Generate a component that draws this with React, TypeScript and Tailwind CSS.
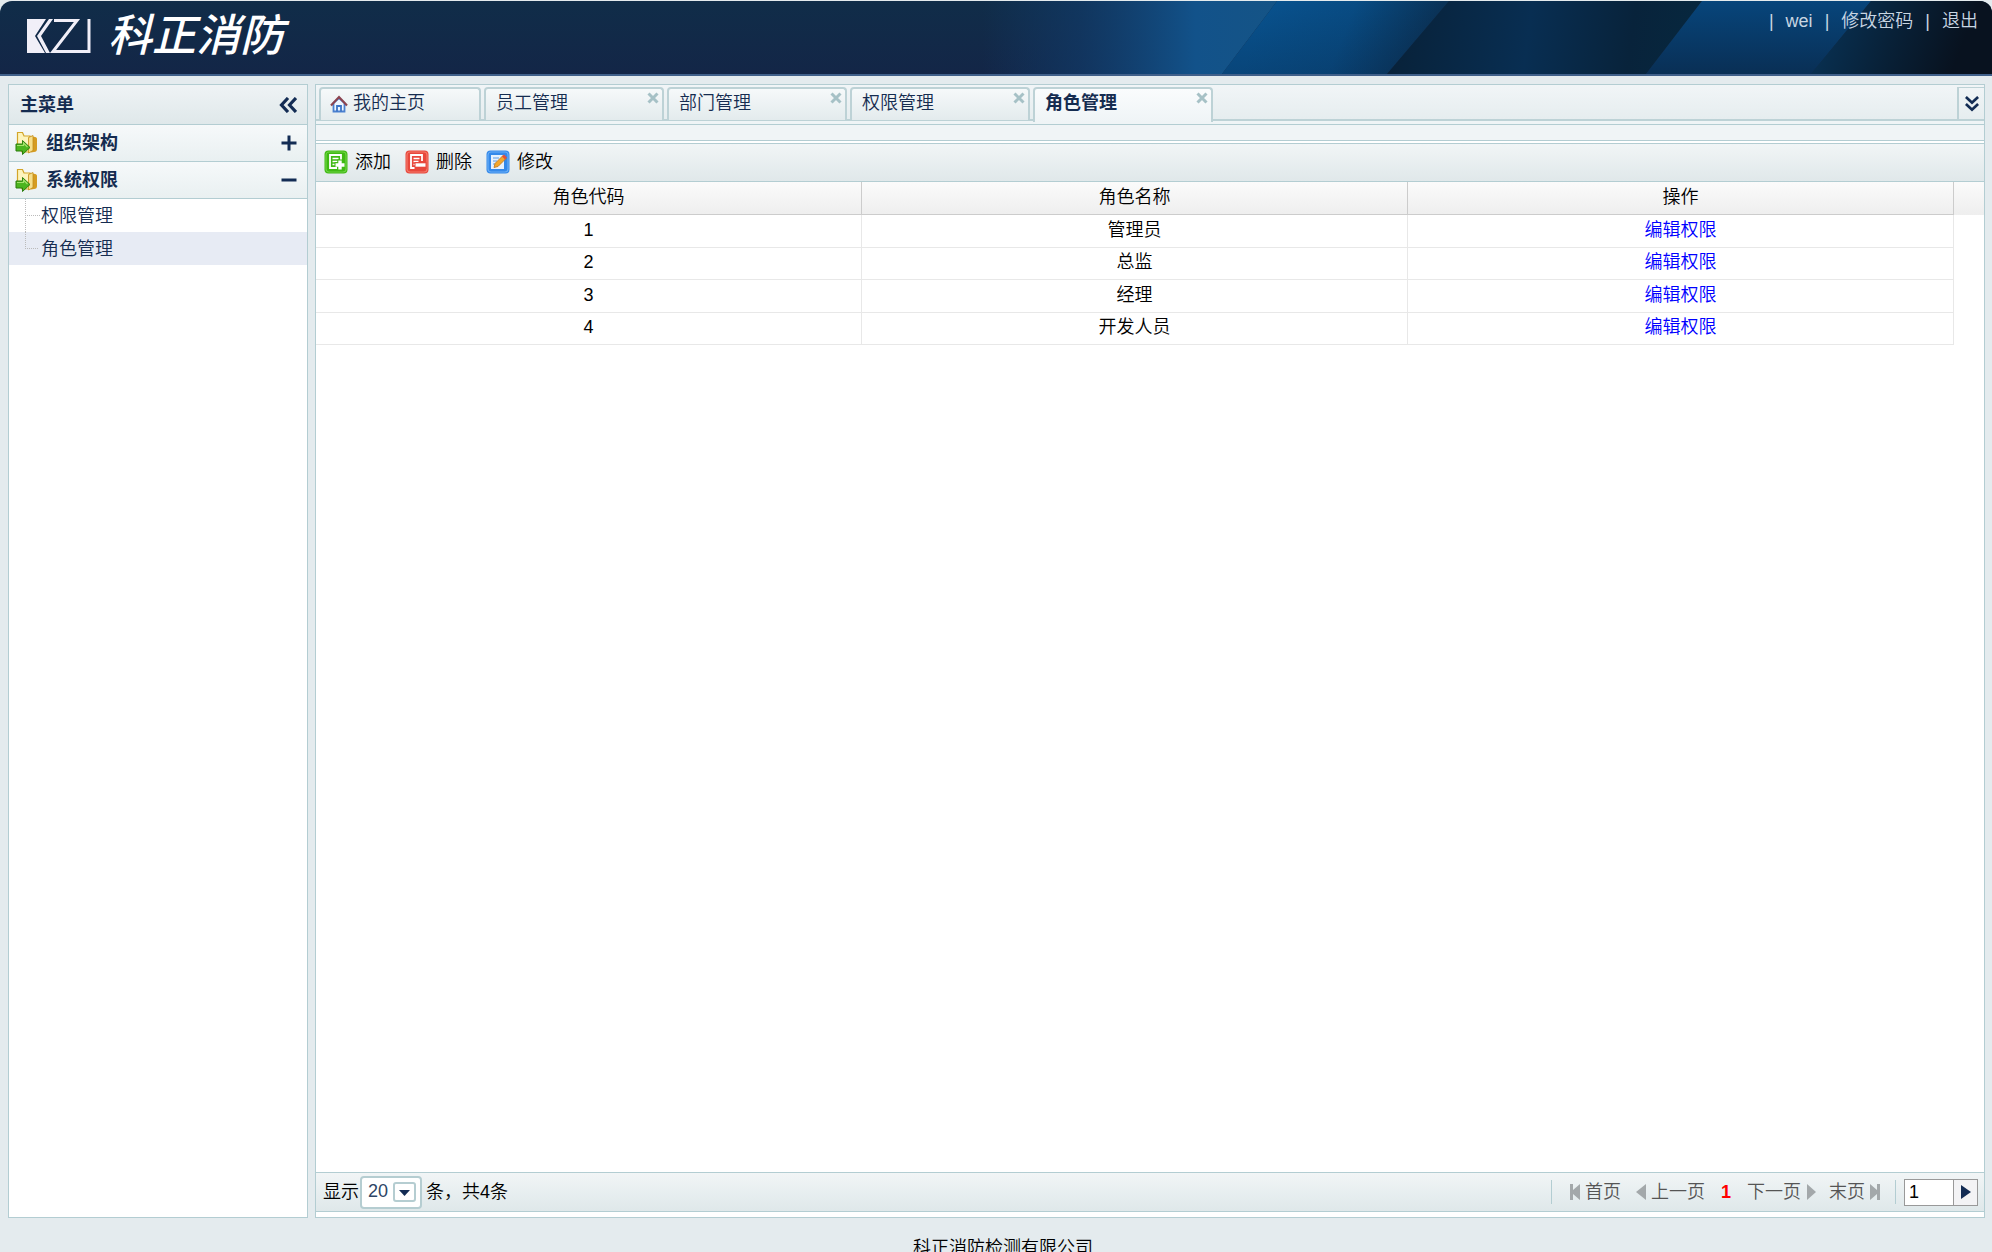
import { useState } from 'react'
import type { ReactNode } from 'react'

const roles = [
  { code: 1, name: '管理员' },
  { code: 2, name: '总监' },
  { code: 3, name: '经理' },
  { code: 4, name: '开发人员' },
]

const tabs = ['员工管理', '部门管理', '权限管理', '角色管理']

function HeaderArt() {
  return (
    <svg className="absolute inset-y-0 right-0 h-full w-[1042px]" viewBox="0 0 1042 73" preserveAspectRatio="none" aria-hidden="true">
      <defs>
        <linearGradient id="glow" x1="0" x2="1" y1="0" y2="0">
          <stop offset="0.1" stopColor="#113a68" stopOpacity="0" />
          <stop offset="0.4" stopColor="#113a68" stopOpacity="0.7" />
          <stop offset="0.75" stopColor="#12528a" />
          <stop offset="1" stopColor="#155486" />
        </linearGradient>
        <linearGradient id="blue" gradientUnits="userSpaceOnUse" x1="320" x2="470" y1="0" y2="60">
          <stop offset="0" stopColor="#08528e" />
          <stop offset="0.5" stopColor="#084c84" />
          <stop offset="1" stopColor="#0a3358" />
        </linearGradient>
        <linearGradient id="deep" gradientUnits="userSpaceOnUse" x1="450" x2="740" y1="0" y2="40">
          <stop offset="0" stopColor="#08223a" />
          <stop offset="0.45" stopColor="#082e52" />
          <stop offset="0.8" stopColor="#08233b" />
          <stop offset="1" stopColor="#07273e" />
        </linearGradient>
        <linearGradient id="band" x1="0" x2="0" y1="0" y2="1">
          <stop offset="0" stopColor="#07457b" />
          <stop offset="1" stopColor="#092f55" />
        </linearGradient>
        <linearGradient id="night" gradientUnits="userSpaceOnUse" x1="880" x2="1010" y1="0" y2="50">
          <stop offset="0" stopColor="#083153" />
          <stop offset="0.5" stopColor="#082138" />
          <stop offset="1" stopColor="#08121f" />
        </linearGradient>
        <linearGradient id="shade" x1="0" x2="0" y1="0" y2="1">
          <stop offset="0" stopColor="#0a1f3d" stopOpacity="0" />
          <stop offset="1" stopColor="#0a1f3d" stopOpacity="0.25" />
        </linearGradient>
      </defs>
      <path d="M0 0H327L272 73H0z" fill="url(#glow)" />
      <path d="M327 0H499L437 73H272z" fill="url(#blue)" />
      <path d="M327 0H499L437 73H272z" fill="url(#shade)" />
      <path d="M499 0H752L696 73H437z" fill="url(#deep)" />
      <path d="M752 0H921L861 73H696z" fill="url(#band)" />
      <path d="M921 0H1042V73H861z" fill="url(#night)" />
    </svg>
  )
}

function FolderIcon() {
  return (
    <svg className="size-6 shrink-0" viewBox="0 0 24 24" aria-hidden="true">
      <path d="M2.500 1.500h5l1.500 3.500h6v16H7L2.500 15z" fill="#fdf4bd" stroke="#d3a52a" strokeWidth="1.200" />
      <path d="M16 5l4 1c1.500 0 2 1 2 2v10c0 2-1 3-3 3l-3 .5z" fill="#d59c22" />
      <path d="M13.500 6.500l4.500-2v15l-4.500 2.500z" fill="#f6df8c" stroke="#c48d18" strokeWidth="0.800" />
      <path d="M1 13h6.500V9.500l7.500 7-7.500 7V20H1z" fill="#4cb51f" stroke="#2a7d0c" />
      <path d="M2 14.500h6.500v-2.500l4 4" fill="none" stroke="#a5e26c" strokeWidth="1.200" />
    </svg>
  )
}

function DoubleChevron({ className }: { className: string }) {
  return (
    <svg className={className} viewBox="0 0 18 16" fill="none" stroke="#132c54" strokeWidth="3.200" aria-hidden="true">
      <path d="M9 1L2.500 8L9 15M17 1l-6.500 7L17 15" />
    </svg>
  )
}

function HomeIcon() {
  return (
    <svg className="h-[18px] w-[18px]" viewBox="0 0 18 18" fill="none" aria-hidden="true">
      <path d="M3.500 8v8.500h11V8L9 3z" fill="#eef6ff" stroke="#4a80cf" strokeWidth="1.800" />
      <path d="M7 16.500V11h4v5.500" stroke="#3c74c6" strokeWidth="1.800" />
      <path d="M1 10.500L9 2l8 8.500" stroke="#8c4450" strokeWidth="2.200" />
    </svg>
  )
}

function ToolIcon({ kind }: { kind: 'add' | 'remove' | 'edit' }) {
  const fill = { add: '#3fb913', remove: '#e8473c', edit: '#3489ea' }[kind]
  const light = { add: '#6fd445', remove: '#f37a6a', edit: '#6aaef5' }[kind]
  return (
    <svg className="size-6" viewBox="0 0 24 24" fill="none" aria-hidden="true">
      <rect x="0.500" y="0.500" width="23" height="23" rx="4" fill={fill} />
      <rect x="2" y="2" width="20" height="20" rx="3" stroke={light} strokeWidth="1.200" />
      {kind === 'edit' ? (
        <>
          <path d="M5 5h13v14H5z" fill="#e6f1fd" />
          <path d="M7 8h6M7 11h4M7 14h3" stroke="#5a9be6" />
          <path d="M8 17.500l1-4 8-8 3 3-8 8z" fill="#f4a62a" stroke="#b8741c" strokeWidth="0.800" />
          <path d="M16 6.500l2-2 3 3-2 2z" fill="#e2513b" />
        </>
      ) : (
        <>
          <path d="M17 11V5H6v13h7" stroke="#fff" strokeWidth="1.800" />
          <path d="M8.500 8.500h6M8.500 11.500h5M8.500 14.500h3" stroke="#fff" strokeWidth="1.300" />
          {kind === 'add' ? (
            <>
              <path d="M16 9.500v10M10.500 14.500h10" stroke={fill} strokeWidth="5" />
              <path d="M16 10.500v9M11.500 15h9" stroke="#fff" strokeWidth="3.400" />
            </>
          ) : (
            <>
              <path d="M9.500 12h12v7h-12z" fill={fill} />
              <path d="M10.500 15h10" stroke="#fff" strokeWidth="3.400" />
            </>
          )}
        </>
      )}
    </svg>
  )
}

function Sidebar() {
  return (
    <aside className="flex w-[300px] shrink-0 flex-col border border-[#b3cdd2] bg-white text-[#152c50]">
      <div className="flex h-10 items-center justify-between border-b border-[#b3cdd2] bg-gradient-to-b from-[#eff3f5] to-[#dfe8ea] pr-2.5 pl-[11px] font-bold">
        主菜单
        <button type="button" aria-label="收起">
          <DoubleChevron className="h-4 w-[18px]" />
        </button>
      </div>
      <SidebarGroup title="组织架构" />
      <SidebarGroup title="系统权限" open />
      <ul>
        <li>
          <TreeLink>权限管理</TreeLink>
        </li>
        <li className="bg-[#e7ebf4]">
          <TreeLink last>角色管理</TreeLink>
        </li>
      </ul>
    </aside>
  )
}

function SidebarGroup({ title, open = false }: { title: string; open?: boolean }) {
  return (
    <button
      type="button"
      aria-expanded={open}
      className="flex h-[37px] w-full items-center border-b border-[#b3cdd2] bg-gradient-to-b from-[#f6f9fa] to-[#e9f0f1] pr-2.5 pl-1.5 font-bold"
    >
      <FolderIcon />
      <span className="ml-[7px] flex-1 text-left">{title}</span>
      <svg className="size-4" viewBox="0 0 16 16" stroke="#132c54" strokeWidth="3" aria-hidden="true">
        <path d={open ? 'M0.500 8h15' : 'M0.500 8h15M8 0.500v15'} />
      </svg>
    </button>
  )
}

function TreeLink({ children, last = false }: { children: ReactNode; last?: boolean }) {
  return (
    <a href="#" className="flex h-[33px] items-center pl-4">
      <svg className="h-full w-4" viewBox="0 0 16 33" stroke="#bbb" strokeDasharray="1 1" aria-hidden="true">
        <path d={last ? 'M0.500 0v16M0 16.500h14' : 'M0.500 0v33M0 16.500h16'} />
      </svg>
      {children}
    </a>
  )
}

function Tab({ title, active }: { title: string; active: boolean }) {
  return (
    <div
      className={
        active
          ? 'flex h-[35px] w-[180px] justify-between rounded-t-sm border-x-2 border-t-2 border-[#bdd2d6] bg-gradient-to-b from-[#fafcfd] to-[#eff4f6] font-bold'
          : 'flex h-[33px] w-[180px] justify-between rounded-t-sm border-x-2 border-t-2 border-[#bdd2d6] bg-gradient-to-b from-[#f6f9fa] to-[#e3ebed]'
      }
    >
      <button type="button" className="h-7 pl-2.5">
        {title}
      </button>
      <button type="button" aria-label={'关闭' + title} className="h-[18px] pr-[3px]">
        <svg className="size-3" viewBox="0 0 12 12" stroke="#a6c1c6" strokeWidth="3" aria-hidden="true">
          <path d="M1.500 1.500l9 9M10.500 1.500l-9 9" />
        </svg>
      </button>
    </div>
  )
}

function Pager() {
  const [page, setPage] = useState('1')
  return (
    <div className="flex h-10 shrink-0 items-center border-y border-[#b3cdd2] bg-gradient-to-b from-[#f1f5f6] to-[#dfe8ea] pr-1.5 pl-[7px]">
      <label htmlFor="size" className="mr-px">
        显示
      </label>
      <div className="relative mr-1">
        <select
          id="size"
          defaultValue="20"
          className="h-[33px] w-[62px] appearance-none rounded-sm border-2 border-[#b5cdd1] bg-white pb-0.5 pl-1.5 text-[#2d4566]"
        >
          <option>20</option>
          <option>50</option>
        </select>
        <svg className="pointer-events-none absolute top-1.5 right-1.5 h-5 w-[23px]" viewBox="0 0 23 20" aria-hidden="true">
          <rect x="1" y="1" width="21" height="18" rx="2" fill="#fff" stroke="#b5cdd1" strokeWidth="2" />
          <path d="M6 8h11l-5.500 6z" fill="#132c54" />
        </svg>
      </div>
      <span>条，共4条</span>

      <nav className="ml-auto flex items-center text-[#555]">
        <span className="mr-[17px] h-6 w-px bg-[#b3cdd2]" />
        <button type="button" className="mr-3.5 flex items-center gap-1">
          <svg className="h-4 w-3" viewBox="0 0 12 16" fill="#a3a8aa" aria-hidden="true">
            <path d="M1 0h3v6l7-6v16l-7-6v6H1z" />
          </svg>
          首页
        </button>
        <button type="button" className="mr-4 flex items-center gap-1">
          <svg className="h-4 w-3" viewBox="0 0 12 16" fill="#a3a8aa" aria-hidden="true">
            <path d="M11 0v16L1 8z" />
          </svg>
          上一页
        </button>
        <span className="mr-4 font-bold text-[#f00]">1</span>
        <button type="button" className="mr-3 flex items-center gap-1">
          下一页
          <svg className="h-4 w-3" viewBox="0 0 12 16" fill="#a3a8aa" aria-hidden="true">
            <path d="M2 0v16l9-8z" />
          </svg>
        </button>
        <button type="button" className="mr-3.5 flex items-center gap-1">
          末页
          <svg className="h-4 w-3" viewBox="0 0 12 16" fill="#a3a8aa" aria-hidden="true">
            <path d="M11 0H8v6L1 0v16l7-6v6h3z" />
          </svg>
        </button>
        <span className="mr-2 h-6 w-px bg-[#b3cdd2]" />
        <input
          aria-label="页码"
          value={page}
          onChange={(e) => setPage(e.target.value)}
          className="h-[27px] w-[50px] border border-[#999] bg-white px-1 text-black"
        />
        <button type="button" aria-label="跳转" className="flex h-[27px] w-6 items-center justify-center border border-l-0 border-[#999] bg-[#f3f3f5]">
          <svg className="h-4 w-2.5" viewBox="0 0 10 16" fill="#132c54" aria-hidden="true">
            <path d="M0 1v14l10-7z" />
          </svg>
        </button>
      </nav>
    </div>
  )
}

export default function App() {
  return (
    <div className="flex h-screen flex-col overflow-hidden bg-[#e4ebee] pt-px font-['Liberation_Sans','Noto_Sans_CJK_SC',sans-serif] text-[18px] leading-6 font-[350]">
      <header className="relative flex h-[75px] shrink-0 justify-between overflow-hidden rounded-t-xl border-b-2 border-[#40608a] bg-gradient-to-b from-[#102d49] to-[#132647]">
        <HeaderArt />
        <div className="relative flex items-center pb-1 pl-[26px] text-white">
          <svg className="h-9 w-[66px]" viewBox="0 0 66 36" fill="none" aria-hidden="true">
            <path d="M1 1h19L9 18l10 17H1z" fill="#f1eff8" />
            <path d="M23 1h4L15 18l9 17h-4L11 18z" fill="#f1eff8" />
            <path d="M28 2.500h23L27 33.500h36V1" stroke="#f1eff8" strokeWidth="3" />
          </svg>
          <span className="ml-4 text-[44px] font-medium italic">科正消防</span>
        </div>
        <nav className="relative flex h-10 items-center gap-3 pr-3.5 text-[#c8d6e2]">
          <span>|</span>
          <a href="#">wei</a>
          <span>|</span>
          <a href="#">修改密码</a>
          <span>|</span>
          <a href="#">退出</a>
        </nav>
      </header>

      <div className="flex min-h-0 flex-1 gap-[7px] pt-2 pr-[7px] pl-2">
        <Sidebar />
        <main className="flex min-w-0 flex-1 flex-col border border-[#b3cdd2] bg-white">
          <div className="flex h-10 shrink-0 border-b border-[#b3cdd2] bg-[#eff4f6]">
            <div className="flex h-9 flex-1 gap-[3px] border-b-2 border-[#bdd2d6] bg-gradient-to-b from-[#f1f5f7] to-[#e6edef] pt-0.5 pl-[3px] text-[#152c50]">
              <button
                type="button"
                className="flex h-[33px] w-[162px] items-start gap-[5px] rounded-t-sm border-x-2 border-t-2 border-[#bdd2d6] bg-gradient-to-b from-[#f6f9fa] to-[#e3ebed] pt-0.5 pl-[9px]"
              >
                <span className="pt-1">
                  <HomeIcon />
                </span>
                我的主页
              </button>
              {tabs.map((title) => (
                <Tab key={title} title={title} active={title === '角色管理'} />
              ))}
              <button type="button" aria-label="更多" className="ml-auto flex w-[27px] items-center justify-center border-t border-l-2 border-[#bdd2d6]">
                <DoubleChevron className="h-[14px] w-4 -rotate-90" />
              </button>
            </div>
          </div>
          <div className="h-4 shrink-0 border-b border-[#b3cdd2] bg-[#f0f4f6]" />
          <div className="mt-0.5 flex h-[39px] shrink-0 items-center gap-3.5 border-y border-[#b3cdd2] bg-gradient-to-b from-[#f1f5f6] to-[#e0e8ea] pb-px pl-2">
            <button type="button" className="flex items-center gap-[7px]">
              <ToolIcon kind="add" />
              添加
            </button>
            <button type="button" className="flex items-center gap-[7px]">
              <ToolIcon kind="remove" />
              删除
            </button>
            <button type="button" className="flex items-center gap-[7px]">
              <ToolIcon kind="edit" />
              修改
            </button>
          </div>
          <div className="flex min-h-0 flex-1 items-start">
            <table className="h-[163px] flex-1 table-fixed border-separate border-spacing-0 text-center">
              <thead>
                <tr className="h-[33px] bg-gradient-to-b from-[#fbfbfb] to-[#eeeeee]">
                  <th className="border-r border-b border-[#ccc] p-0 pb-0.5 font-[350]">角色代码</th>
                  <th className="border-r border-b border-[#ccc] p-0 pb-0.5 font-[350]">角色名称</th>
                  <th className="border-r border-b border-[#ccc] p-0 pb-0.5 font-[350]">操作</th>
                </tr>
              </thead>
              <tbody>
                {roles.map((role) => (
                  <tr key={role.code}>
                    <td className="border-r border-b border-[#e8e8e8] p-0 pb-0.5">{role.code}</td>
                    <td className="border-r border-b border-[#e8e8e8] p-0 pb-0.5">{role.name}</td>
                    <td className="border-r border-b border-[#e8e8e8] p-0 pb-0.5">
                      <a href="#" className="text-[#00f]">
                        编辑权限
                      </a>
                    </td>
                  </tr>
                ))}
              </tbody>
            </table>
            <div className="h-[33px] w-[30px] bg-gradient-to-b from-[#fbfbfb] to-[#eeeeee]" />
          </div>
          <Pager />
          <div className="h-[5px] shrink-0" />
        </main>
      </div>

      <footer className="h-[34px] shrink-0 pt-[18px] pl-3.5 text-center text-black">科正消防检测有限公司</footer>
    </div>
  )
}
